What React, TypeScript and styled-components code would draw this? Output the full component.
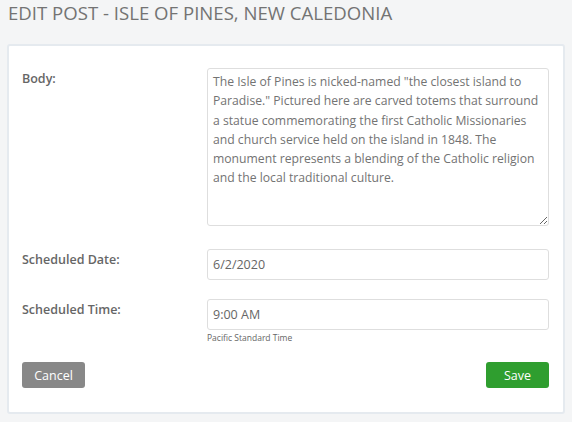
import React from "react";
import styled, { createGlobalStyle } from "styled-components";

const GlobalStyle = createGlobalStyle`
  body {
    margin: 0;
    background-color: #f4f5f6;
    font-family: "Open Sans", "Liberation Sans", sans-serif;
  }
`;

const Page = styled.div`
  padding: 0 7px 9px;
`;

const Title = styled.h1`
  margin: 0;
  padding: 1px 0 0 1px;
  height: 43px;
  font-size: 18.6px;
  font-weight: 400;
  line-height: 24px;
  color: #737373;
  text-transform: uppercase;
`;

const Card = styled.form`
  background-color: #ffffff;
  border: 2px solid #e5eaef;
  border-radius: 3px;
  padding: 22px 14px 24px 13px;
`;

const Row = styled.div<{ $gap?: number }>`
  display: grid;
  grid-template-columns: 185px 1fr;
  align-items: start;
  margin-bottom: ${(p) => p.$gap ?? 19}px;
`;

const Label = styled.label`
  font-size: 12.5px;
  font-weight: 600;
  color: #666666;
  padding-top: 2px;
  line-height: 18px;
`;

const Field = styled.div`
  display: flex;
  flex-direction: column;
`;

const TextArea = styled.textarea`
  display: block;
  box-sizing: border-box;
  width: 100%;
  height: 158px;
  margin: 0;
  padding: 3px 5px;
  border: 1px solid #dedede;
  border-radius: 3px;
  font-family: inherit;
  font-size: 12.2px;
  line-height: 19.3px;
  color: #737373;
`;

const Input = styled.input`
  display: block;
  box-sizing: border-box;
  width: 100%;
  height: 31px;
  margin: 0;
  padding: 0 5px;
  border: 1px solid #dedede;
  border-radius: 3px;
  font-family: inherit;
  font-size: 12.5px;
  color: #666666;
`;

const Help = styled.span`
  margin-top: 2px;
  font-size: 8.5px;
  line-height: 12px;
  color: #666666;
`;

const Actions = styled.div`
  display: flex;
  justify-content: space-between;
  margin-top: 18px;
`;

const Button = styled.button<{ $tone: "gray" | "green" }>`
  width: 63px;
  height: 26px;
  border: none;
  border-radius: 3px;
  background-color: ${(p) => (p.$tone === "green" ? "#2f9e2f" : "#888888")};
  color: #ffffff;
  font-family: inherit;
  font-size: 12.5px;
  cursor: pointer;
`;

const body =
  'The Isle of Pines is nicked-named "the closest island to Paradise." Pictured here are carved totems that surround a statue commemorating the first Catholic Missionaries and church service held on the island in 1848. The monument represents a blending of the Catholic religion and the local traditional culture.';

export default function App() {
  return (
    <>
      <GlobalStyle />
      <Page>
        <Title>Edit Post - Isle of Pines, New Caledonia</Title>
        <Card onSubmit={(e) => e.preventDefault()}>
          <Row $gap={23}>
            <Label>Body:</Label>
            <TextArea defaultValue={body} />
          </Row>
          <Row>
            <Label>Scheduled Date:</Label>
            <Input defaultValue="6/2/2020" />
          </Row>
          <Row $gap={0}>
            <Label>Scheduled Time:</Label>
            <Field>
              <Input defaultValue="9:00 AM" />
              <Help>Pacific Standard Time</Help>
            </Field>
          </Row>
          <Actions>
            <Button type="button" $tone="gray">
              Cancel
            </Button>
            <Button type="submit" $tone="green">
              Save
            </Button>
          </Actions>
        </Card>
      </Page>
    </>
  );
}
